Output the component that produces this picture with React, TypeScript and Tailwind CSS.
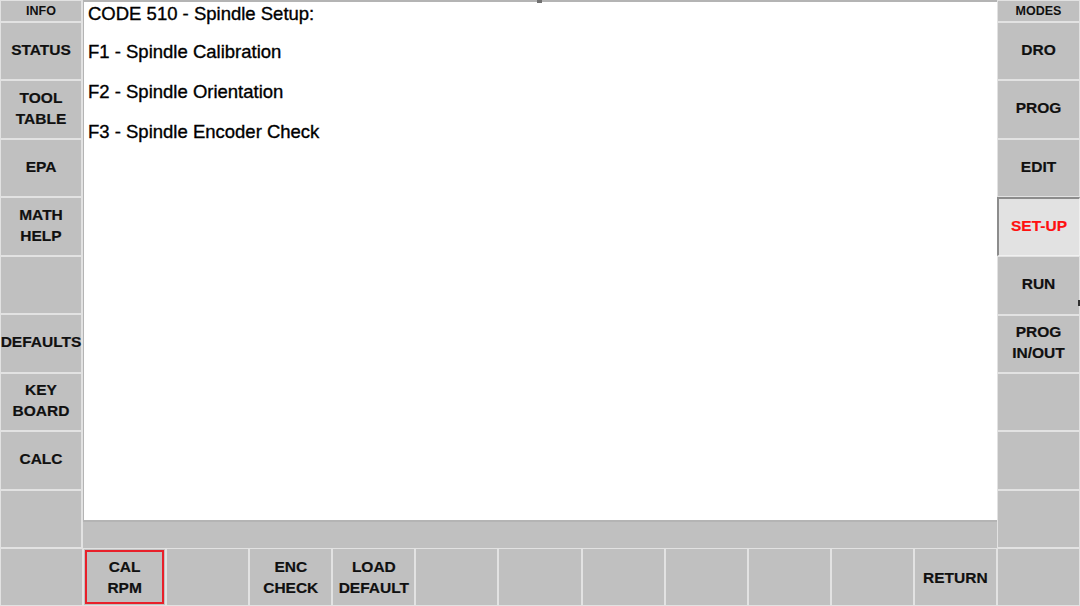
import React from "react";

type KeyProps = {
  label?: string[];
  active?: boolean;
  selected?: boolean;
  side?: boolean;
};

function Key({ label = [], active = false, selected = false, side = false }: KeyProps) {
  return (
    <div
      className={
        "relative flex min-h-0 flex-1 flex-col items-center justify-center border text-[15.5px] font-bold leading-[21px] text-[#101010] [-webkit-text-stroke:0.2px] " +
        (side ? "pb-[3px] " : "") +
        (active
          ? "border-t-2 border-l-2 border-t-[#8c8c8c] border-l-[#8c8c8c] border-r-[#f0f0f0] border-b-[#f0f0f0] bg-[#e2e2e2] text-[#ff1010]"
          : "border-[#e2e2e2] bg-[#c0c0c0]")
      }
    >
      {label.map((l) => (
        <span key={l} className="whitespace-nowrap">
          {l}
        </span>
      ))}
      {selected && <div className="pointer-events-none absolute inset-[1px] border-2 border-[#e8202a]" />}
    </div>
  );
}

function Header({ text }: { text: string }) {
  return (
    <div className="flex h-[22px] shrink-0 items-center justify-center border border-[#e2e2e2] bg-[#c0c0c0] text-[12.5px] font-bold text-[#101010]">
      {text}
    </div>
  );
}

const leftKeys: string[][] = [
  ["STATUS"],
  ["TOOL", "TABLE"],
  ["EPA"],
  ["MATH", "HELP"],
  [],
  ["DEFAULTS"],
  ["KEY", "BOARD"],
  ["CALC"],
  [],
];

const rightKeys: string[][] = [["DRO"], ["PROG"], ["EDIT"], ["SET-UP"], ["RUN"], ["PROG", "IN/OUT"], [], [], []];

const bottomKeys: string[][] = [
  [],
  ["CAL", "RPM"],
  [],
  ["ENC", "CHECK"],
  ["LOAD", "DEFAULT"],
  [],
  [],
  [],
  [],
  [],
  [],
  ["RETURN"],
  [],
];

const lines = ["F1 - Spindle Calibration", "F2 - Spindle Orientation", "F3 - Spindle Encoder Check"];

export default function App() {
  return (
    <div
      className="relative flex h-[606px] w-[1080px] flex-col overflow-hidden bg-[#c0c0c0]"
      style={{ fontFamily: '"Liberation Sans", Arial, sans-serif' }}
    >
      <div className="flex h-[548px] shrink-0">
        {/* Info column */}
        <div className="flex w-[82px] shrink-0 flex-col">
          <Header text="INFO" />
          {leftKeys.map((k, i) => (
            <Key key={i} label={k} side />
          ))}
        </div>

        {/* Message area */}
        <div className="flex min-w-0 flex-1 flex-col border-l border-[#e2e2e2]">
          <div className="relative flex flex-1 flex-col border-t-2 border-l border-b-2 border-[#b4b4b4] bg-white pl-[4px] text-[18.5px] leading-[20px] text-black [-webkit-text-stroke:0.35px]">
            <span className="mt-[2px]">CODE 510 - Spindle Setup:</span>
            {lines.map((l, i) => (
              <span key={l} className={i === 0 ? "mt-[18px]" : "mt-[20px]"}>
                {l}
              </span>
            ))}
            <div className="absolute left-[453px] top-[-2px] h-[3px] w-[5px] bg-[#707070]" />
          </div>
          <div className="h-[26px] shrink-0 bg-[#c0c0c0]" />
        </div>

        {/* Modes column */}
        <div className="relative flex w-[83px] shrink-0 flex-col">
          <Header text="MODES" />
          {rightKeys.map((k, i) => (
            <Key key={i} label={k} active={k[0] === "SET-UP"} side />
          ))}
          <div className="absolute right-0 top-[300px] h-[6px] w-[2px] bg-[#303030]" />
        </div>
      </div>

      {/* Soft keys */}
      <div className="grid h-[58px] shrink-0 grid-cols-[repeat(13,minmax(0,1fr))]">
        {bottomKeys.map((k, i) => (
          <Key key={i} label={k} selected={k[0] === "CAL"} />
        ))}
      </div>
    </div>
  );
}
